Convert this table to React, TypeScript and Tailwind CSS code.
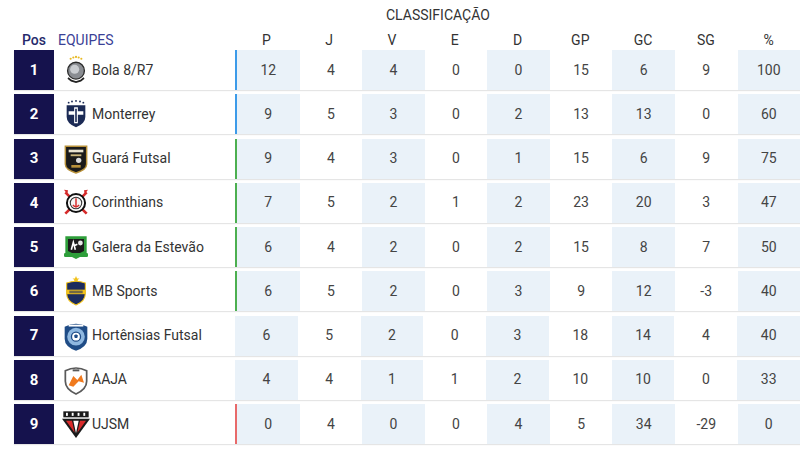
import React from 'react';

type Team = {
    name: string;
    logo: string;
    stats: (number | string)[];
    mark?: 'blue' | 'green' | 'red';
};

const teams: Team[] = [
    { name: 'Bola 8/R7', logo: 'bola', stats: [12, 4, 4, 0, 0, 15, 6, 9, 100], mark: 'blue' },
    { name: 'Monterrey', logo: 'monterrey', stats: [9, 5, 3, 0, 2, 13, 13, 0, 60], mark: 'blue' },
    { name: 'Guará Futsal', logo: 'guara', stats: [9, 4, 3, 0, 1, 15, 6, 9, 75], mark: 'green' },
    { name: 'Corinthians', logo: 'corinthians', stats: [7, 5, 2, 1, 2, 23, 20, 3, 47], mark: 'green' },
    { name: 'Galera da Estevão', logo: 'galera', stats: [6, 4, 2, 0, 2, 15, 8, 7, 50], mark: 'green' },
    { name: 'MB Sports', logo: 'mb', stats: [6, 5, 2, 0, 3, 9, 12, -3, 40], mark: 'green' },
    { name: 'Hortênsias Futsal', logo: 'hortensias', stats: [6, 5, 2, 0, 3, 18, 14, 4, 40] },
    { name: 'AAJA', logo: 'aaja', stats: [4, 4, 1, 1, 2, 10, 10, 0, 33] },
    { name: 'UJSM', logo: 'ujsm', stats: [0, 4, 0, 0, 4, 5, 34, -29, 0], mark: 'red' },
];

const columns = ['P', 'J', 'V', 'E', 'D', 'GP', 'GC', 'SG', '%'];

function Logo({ type }: { type: string }) {
    const cls = 'w-[32px] h-[32px] shrink-0';
    switch (type) {
        case 'bola':
            return (
                <svg viewBox="0 0 24 24" className={cls}>
                    <circle cx="8" cy="3.6" r="0.8" fill="#e8b923" />
                    <circle cx="10" cy="2.6" r="0.8" fill="#e8b923" />
                    <circle cx="12" cy="2.2" r="0.8" fill="#e8b923" />
                    <circle cx="14" cy="2.6" r="0.8" fill="#e8b923" />
                    <circle cx="16" cy="3.6" r="0.8" fill="#e8b923" />
                    <circle cx="12" cy="12.5" r="6.3" fill="#8a8d92" stroke="#2b2b2b" strokeWidth="1" />
                    <circle cx="11" cy="11.5" r="3.4" fill="#c9ccd0" />
                    <path d="M6 18 L8.5 20 L12 21 L15.5 20 L18 18" stroke="#222" strokeWidth="1.3" fill="none" />
                </svg>
            );
        case 'monterrey':
            return (
                <svg viewBox="0 0 24 24" className={cls}>
                    <circle cx="6.5" cy="3.5" r="0.7" fill="#1b2a55" />
                    <circle cx="9" cy="2.6" r="0.7" fill="#1b2a55" />
                    <circle cx="12" cy="2.2" r="0.7" fill="#1b2a55" />
                    <circle cx="15" cy="2.6" r="0.7" fill="#1b2a55" />
                    <circle cx="17.5" cy="3.5" r="0.7" fill="#1b2a55" />
                    <path d="M5 5.5 L19 5.5 L19 14 Q19 19 12 22 Q5 19 5 14 Z" fill="#1b2a55" />
                    <path d="M10.6 7 L13.4 7 L13.4 10 L17.5 10 L17.5 12.5 L13.4 12.5 L13.4 19 L10.6 19 L10.6 12.5 L6.5 12.5 L6.5 10 L10.6 10 Z" fill="#ffffff" />
                    <path d="M11.4 8 L12.6 8 L12.6 18 L11.4 18 Z" fill="#1b2a55" />
                </svg>
            );
        case 'guara':
            return (
                <svg viewBox="0 0 24 24" className={cls}>
                    <path d="M4 2.5 L20 2.5 L20 16 Q20 20 12 22.5 Q4 20 4 16 Z" fill="#1a1a1a" stroke="#b8913a" strokeWidth="1.1" />
                    <rect x="6.5" y="5" width="11" height="2" fill="#e8e2cf" />
                    <rect x="8" y="8.5" width="8" height="1.4" fill="#c9b47a" />
                    <circle cx="14" cy="13" r="2" fill="#dcdcdc" />
                    <rect x="8.5" y="16.5" width="7" height="2" fill="#b8913a" />
                </svg>
            );
        case 'corinthians':
            return (
                <svg viewBox="0 0 24 24" className={cls}>
                    <path d="M4 4 L20 20 M20 4 L4 20" stroke="#d62b2b" strokeWidth="2" />
                    <path d="M3 2 L6 2.5 L5.5 5.5 Z M21 2 L18 2.5 L18.5 5.5 Z" fill="#d62b2b" />
                    <circle cx="12" cy="12" r="6.8" fill="#ffffff" stroke="#111" strokeWidth="1.5" />
                    <circle cx="12" cy="12" r="4.3" fill="#f5f5f5" stroke="#333" strokeWidth="0.8" />
                    <path d="M12 8.5 L12 15.5 M9.7 13.5 Q12 16.3 14.3 13.5" stroke="#d62b2b" strokeWidth="1.1" fill="none" />
                </svg>
            );
        case 'galera':
            return (
                <svg viewBox="0 0 24 24" className={cls}>
                    <path d="M4 4 L20 4 L20 17 L12 21 L4 17 Z" fill="#2e9e3a" />
                    <path d="M6 6 L18 6 L18 15 L12 18 L6 15 Z" fill="#1b1b1b" />
                    <path d="M8.5 14 L10 8.5 L11.5 14 M10.5 11 L13 10" stroke="#ffffff" strokeWidth="1.2" fill="none" />
                    <circle cx="15.3" cy="9" r="1.8" fill="#e8e8e8" />
                    <rect x="3" y="16.5" width="18" height="3" rx="1" fill="#2e9e3a" />
                </svg>
            );
        case 'mb':
            return (
                <svg viewBox="0 0 24 24" className={cls}>
                    <path d="M12 0.8 L12.8 2.6 L14.6 2.6 L13.2 3.7 L13.7 5.5 L12 4.4 L10.3 5.5 L10.8 3.7 L9.4 2.6 L11.2 2.6 Z" fill="#f2c21b" />
                    <path d="M5 6 Q12 3.5 19 6 L19 14 Q19 19.5 12 22.5 Q5 19.5 5 14 Z" fill="#1c2b5e" stroke="#f2c21b" strokeWidth="0.8" />
                    <rect x="5.2" y="11" width="13.6" height="3.4" fill="#f2c21b" />
                    <rect x="7" y="11.7" width="10" height="2" fill="#1c2b5e" opacity="0.6" />
                </svg>
            );
        case 'hortensias':
            return (
                <svg viewBox="0 0 24 24" className={cls}>
                    <path d="M3.5 5 Q12 0.5 20.5 5 L20.5 14 Q20.5 20 12 23 Q3.5 20 3.5 14 Z" fill="#1f4c86" />
                    <circle cx="12" cy="12.5" r="6.6" fill="#8fb8e0" />
                    <circle cx="12" cy="12.5" r="3.4" fill="#ffffff" stroke="#1f4c86" strokeWidth="1" />
                    <path d="M12 10.6 L13.5 11.7 L12.9 13.5 L11.1 13.5 L10.5 11.7 Z" fill="#1f4c86" />
                    <rect x="6.5" y="3.5" width="11" height="1.4" fill="#ffffff" />
                </svg>
            );
        case 'aaja':
            return (
                <svg viewBox="0 0 24 24" className={cls}>
                    <path d="M4 5 Q12 1 20 5 L20 13 Q20 19 12 22.5 Q4 19 4 13 Z" fill="#ffffff" stroke="#5a5a5a" strokeWidth="1.3" />
                    <rect x="9.5" y="4" width="5" height="1.5" fill="#5a5a5a" />
                    <path d="M6.5 16 L10 9 L13 12 L16 8 L18 14 L14 13 L10 17 Z" fill="#f07a1e" />
                </svg>
            );
        case 'ujsm':
            return (
                <svg viewBox="0 0 24 24" className={cls}>
                    <rect x="2.5" y="2.5" width="19" height="4.5" fill="#1a1a1a" />
                    <rect x="4.5" y="3.6" width="1.4" height="2.3" fill="#fff" />
                    <rect x="8.8" y="3.6" width="1.4" height="2.3" fill="#fff" />
                    <rect x="13.2" y="3.6" width="1.4" height="2.3" fill="#fff" />
                    <rect x="17.5" y="3.6" width="1.4" height="2.3" fill="#fff" />
                    <path d="M1.5 8 L22.5 8 L12 22.5 Z" fill="#1a1a1a" />
                    <path d="M4.5 9.5 L9 9.5 L11 18.5 Z" fill="#d92b2b" />
                    <path d="M10 9.5 L14 9.5 L12 19 Z" fill="#ffffff" />
                    <path d="M15 9.5 L19.5 9.5 L13 18.5 Z" fill="#d92b2b" />
                </svg>
            );
        default:
            return null;
    }
}

const markClass: Record<string, string> = {
    blue: 'border-l-2 border-[#3d9be9]',
    green: 'border-l-2 border-[#4caf50]',
    red: 'border-l-2 border-[#e86a6a]',
};

export default function App() {
    return (
        <div className="w-[800px] h-[459px] bg-white pl-[14px] font-['Roboto',sans-serif] overflow-hidden">
            {/* Title */}
            <div className="h-[30px] flex items-center pl-[372px] text-[14px] text-[#333]">
                CLASSIFICAÇÃO
            </div>

            {/* Column headers */}
            <div className="h-[20px] flex items-center text-[14px]">
                <div className="w-[40px] text-center font-medium text-[#262a6b]">Pos</div>
                <div className="w-[181px] pl-[4px] text-[#3a4196]">EQUIPES</div>
                {columns.map((c) => (
                    <div key={c} className="flex-1 text-center text-[#333]">
                        {c}
                    </div>
                ))}
            </div>

            {/* Rows */}
            <div className="flex flex-col gap-[4.25px]">
                {teams.map((team, i) => (
                    <div key={team.name} className="h-[40px] flex shadow-[0_1px_1px_rgba(0,0,0,0.1)]">
                        <div className="w-[40px] bg-[#15124d] flex items-center justify-center text-white font-bold text-[15px]">
                            {i + 1}
                        </div>
                        <div className="w-[181px] bg-white flex items-center pl-[6px]">
                            <Logo type={team.logo} />
                            <span className="text-[14px] text-[#333] whitespace-nowrap">{team.name}</span>
                        </div>
                        {team.stats.map((s, j) => (
                            <div
                                key={j}
                                className={`flex-1 flex items-center justify-center text-[14px] text-[#444] ${
                                    j % 2 === 0 ? 'bg-[#eaf2f9]' : 'bg-white'
                                } ${j === 0 && team.mark ? markClass[team.mark] : ''}`}
                            >
                                {s}
                            </div>
                        ))}
                    </div>
                ))}
            </div>
        </div>
    );
}
